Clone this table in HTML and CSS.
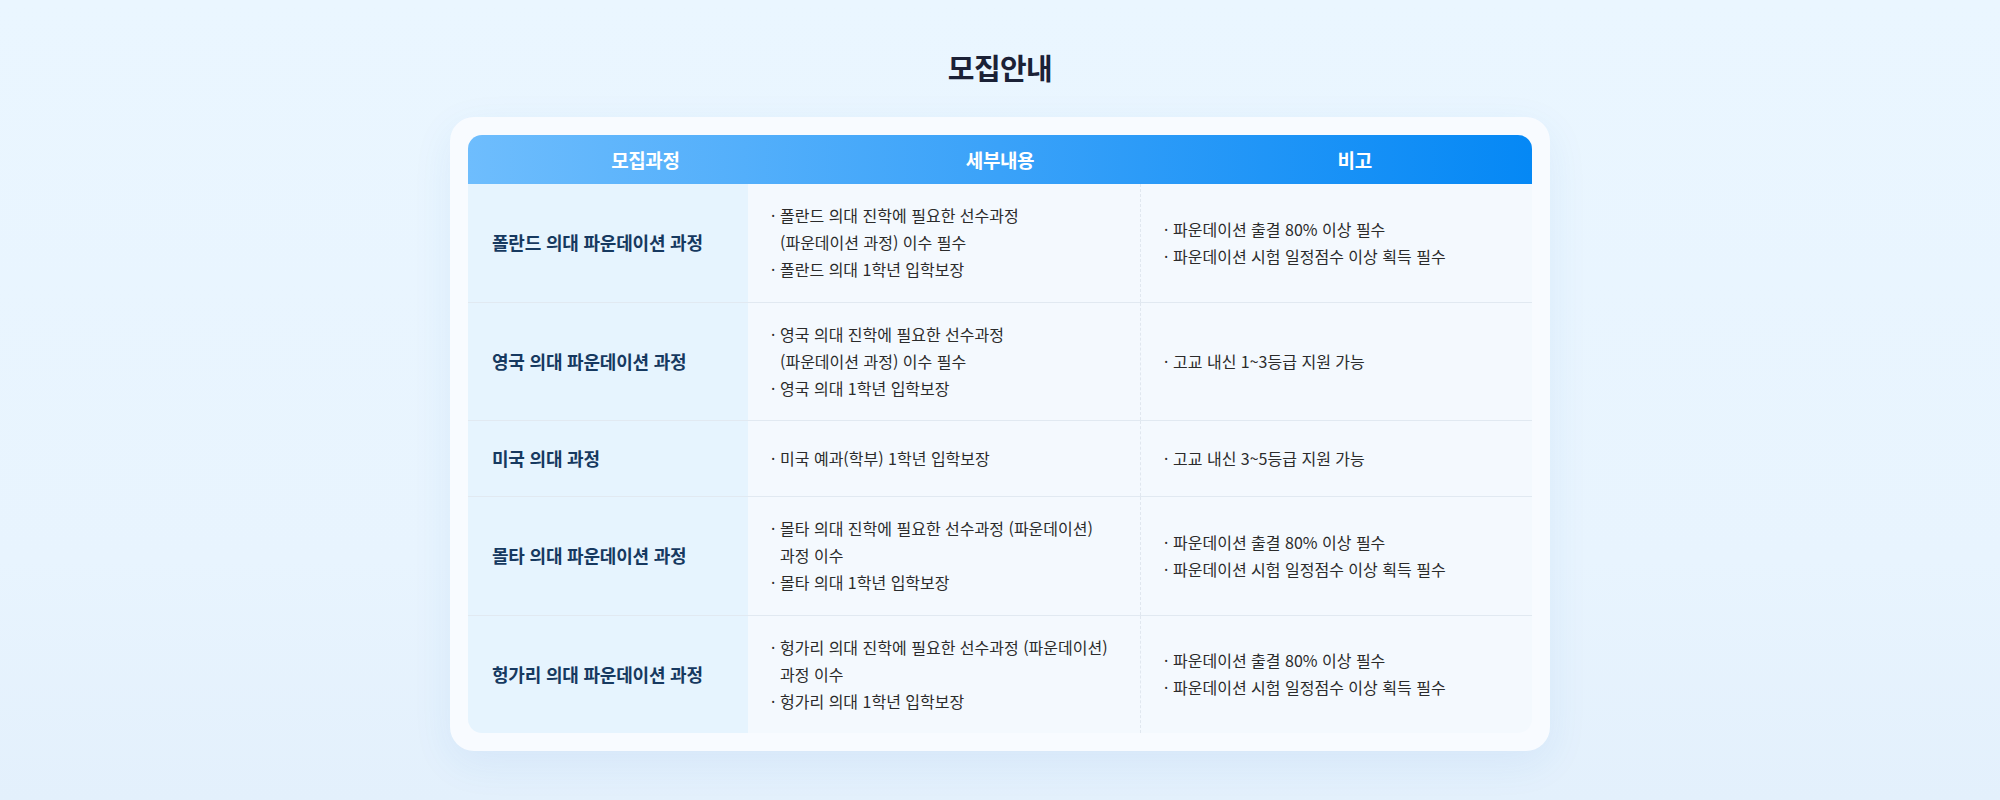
FILE: index.html
```html
<!DOCTYPE html>
<html lang="ko">
<head>
<meta charset="utf-8">
<title>모집안내</title>
<link rel="stylesheet" href="styles.css">
</head>
<body>
<main class="page">
  <h2 class="title">모집안내</h2>
  <section class="card">
    <div class="table">
      <div class="thead">
        <div class="th">모집과정</div>
        <div class="th">세부내용</div>
        <div class="th">비고</div>
      </div>
      <div class="row">
        <div class="cell name">폴란드 의대 파운데이션 과정</div>
        <div class="cell detail">
          <ul>
            <li><span class="dot">·</span>폴란드 의대 진학에 필요한 선수과정<br>(파운데이션 과정) 이수 필수</li>
            <li><span class="dot">·</span>폴란드 의대 1학년 입학보장</li>
          </ul>
        </div>
        <div class="cell note">
          <ul>
            <li><span class="dot">·</span>파운데이션 출결 80% 이상 필수</li>
            <li><span class="dot">·</span>파운데이션 시험 일정점수 이상 획득 필수</li>
          </ul>
        </div>
      </div>
      <div class="row">
        <div class="cell name">영국 의대 파운데이션 과정</div>
        <div class="cell detail">
          <ul>
            <li><span class="dot">·</span>영국 의대 진학에 필요한 선수과정<br>(파운데이션 과정) 이수 필수</li>
            <li><span class="dot">·</span>영국 의대 1학년 입학보장</li>
          </ul>
        </div>
        <div class="cell note">
          <ul>
            <li><span class="dot">·</span>고교 내신 1~3등급 지원 가능</li>
          </ul>
        </div>
      </div>
      <div class="row">
        <div class="cell name">미국 의대 과정</div>
        <div class="cell detail">
          <ul>
            <li><span class="dot">·</span>미국 예과(학부) 1학년 입학보장</li>
          </ul>
        </div>
        <div class="cell note">
          <ul>
            <li><span class="dot">·</span>고교 내신 3~5등급 지원 가능</li>
          </ul>
        </div>
      </div>
      <div class="row">
        <div class="cell name">몰타 의대 파운데이션 과정</div>
        <div class="cell detail">
          <ul>
            <li><span class="dot">·</span>몰타 의대 진학에 필요한 선수과정 (파운데이션)<br>과정 이수</li>
            <li><span class="dot">·</span>몰타 의대 1학년 입학보장</li>
          </ul>
        </div>
        <div class="cell note">
          <ul>
            <li><span class="dot">·</span>파운데이션 출결 80% 이상 필수</li>
            <li><span class="dot">·</span>파운데이션 시험 일정점수 이상 획득 필수</li>
          </ul>
        </div>
      </div>
      <div class="row">
        <div class="cell name">헝가리 의대 파운데이션 과정</div>
        <div class="cell detail">
          <ul>
            <li><span class="dot">·</span>헝가리 의대 진학에 필요한 선수과정 (파운데이션)<br>과정 이수</li>
            <li><span class="dot">·</span>헝가리 의대 1학년 입학보장</li>
          </ul>
        </div>
        <div class="cell note">
          <ul>
            <li><span class="dot">·</span>파운데이션 출결 80% 이상 필수</li>
            <li><span class="dot">·</span>파운데이션 시험 일정점수 이상 획득 필수</li>
          </ul>
        </div>
      </div>
    </div>
  </section>
</main>
</body>
</html>
```

FILE: styles.css
```css
html, body {
  margin: 0;
  padding: 0;
}

body {
  background: linear-gradient(180deg, #eaf6ff 0%, #e8f4fe 70%, #e3f0fc 100%);
  font-family: "Noto Sans CJK KR", "Noto Sans", sans-serif;
  color: #2b2b2b;
  min-height: 800px;
}

.page {
  padding-top: 47px;
  display: flex;
  flex-direction: column;
  align-items: center;
}

.title {
  margin: 0;
  font-size: 29px;
  line-height: 40px;
  font-weight: 700;
  letter-spacing: -0.6px;
  color: #1b2136;
}

.card {
  margin-top: 30px;
  width: 1100px;
  box-sizing: border-box;
  padding: 18px;
  background: #f8fbff;
  border-radius: 24px;
  box-shadow: 0 12px 40px rgba(40, 120, 200, 0.08);
}

.table {
  border-radius: 14px;
  overflow: hidden;
}

.thead {
  display: grid;
  grid-template-columns: 1fr 1fr 1fr;
  height: 49px;
  background: linear-gradient(90deg, #6ebdfd 0%, #3aa2f9 50%, #0588f5 100%);
}

.th {
  display: flex;
  align-items: center;
  justify-content: center;
  color: #ffffff;
  font-size: 19px;
  font-weight: 700;
  letter-spacing: -0.4px;
}

.row {
  display: grid;
  grid-template-columns: 280px 1fr 1fr;
  border-bottom: 1px solid #e1e9f1;
}

.row:last-child {
  border-bottom: none;
}

.cell {
  display: flex;
  align-items: center;
  box-sizing: border-box;
}

.name {
  background: #e6f4fe;
  padding: 24px 24px;
  font-size: 18px;
  line-height: 27px;
  font-weight: 700;
  color: #163960;
  letter-spacing: -0.2px;
}

.detail,
.note {
  background: #f4f9fe;
  padding: 18px 23px 18.5px;
}

.note {
  border-left: 1px dashed #e0e7ef;
}

.cell ul {
  list-style: none;
  margin: 0;
  padding: 0;
}

.cell li {
  font-size: 16px;
  line-height: 27px;
  color: #2b2b2b;
  padding-left: 9px;
  text-indent: -9px;
  white-space: nowrap;
}

.dot {
  display: inline-block;
  width: 9px;
  line-height: 16px;
  text-indent: 0;
  font-family: "Noto Sans", sans-serif;
}
```
